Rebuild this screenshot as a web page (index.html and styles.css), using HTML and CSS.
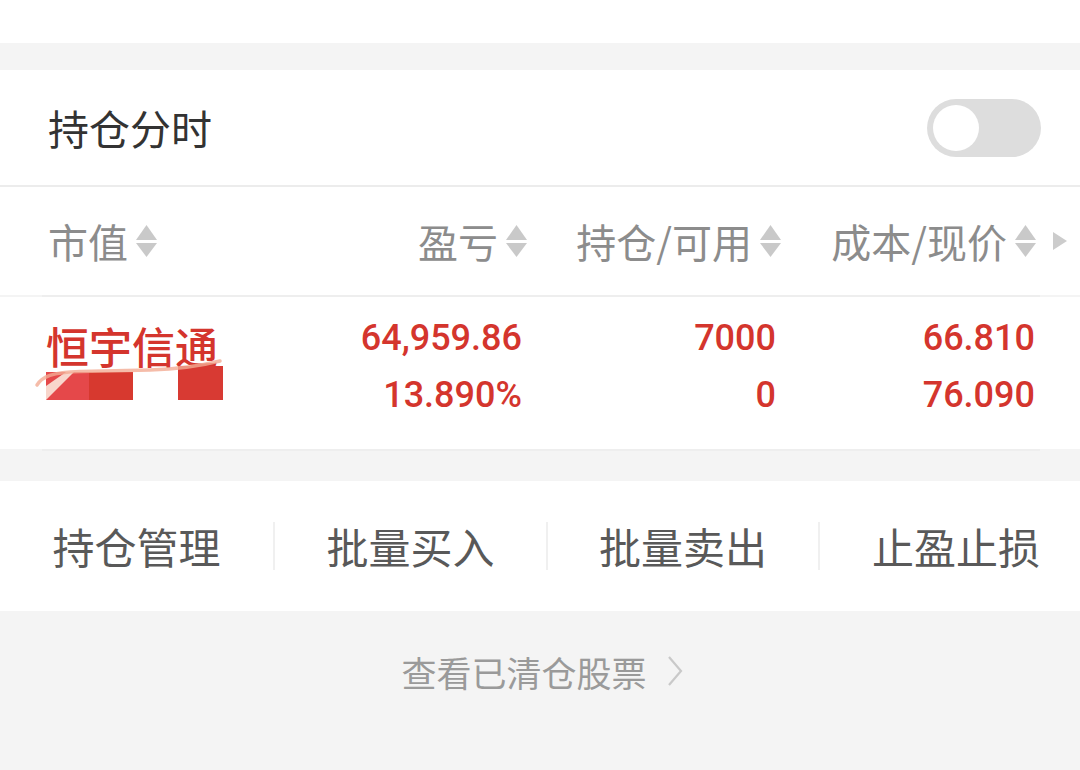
FILE: index.html
```html
<!DOCTYPE html>
<html lang="zh-CN">
<head>
<meta charset="utf-8">
<title>持仓</title>
<link rel="stylesheet" href="styles.css">
</head>
<body>
<div class="page">
  <div class="topbar"></div>
  <div class="band"></div>

  <div class="title-row">
    <span class="title">持仓分时</span>
    <span class="toggle"><span class="knob"></span></span>
  </div>
  <div class="rule-full"></div>

  <div class="thead">
    <div class="th th-first">市值<svg class="sort" viewBox="0 0 21 32"><path d="M0 15 L10.5 0 L21 15 Z"/><path d="M0 18 L21 18 L10.5 32 Z"/></svg></div>
    <div class="th">盈亏<svg class="sort" viewBox="0 0 21 32"><path d="M0 15 L10.5 0 L21 15 Z"/><path d="M0 18 L21 18 L10.5 32 Z"/></svg></div>
    <div class="th">持仓/可用<svg class="sort" viewBox="0 0 21 32"><path d="M0 15 L10.5 0 L21 15 Z"/><path d="M0 18 L21 18 L10.5 32 Z"/></svg></div>
    <div class="th">成本/现价<svg class="sort" viewBox="0 0 21 32"><path d="M0 15 L10.5 0 L21 15 Z"/><path d="M0 18 L21 18 L10.5 32 Z"/></svg></div>
    <div class="th-more"><svg class="more" viewBox="0 0 14 18"><path d="M0 0 L14 9 L0 18 Z"/></svg></div>
  </div>
  <div class="rule-inset"></div>

  <div class="trow">
    <div class="name-cell">
      <span class="name">恒宇信通</span>
      <svg class="redact" viewBox="30 350 195 52" width="195" height="52">
        <rect x="46" y="370" width="43" height="28" fill="#e5484a"/>
        <rect x="89" y="370" width="44" height="28" fill="#d7392f"/>
        <rect x="178" y="364" width="45" height="34" fill="#d83a33"/>
        <polygon points="46,398 46,384 66,370 74,370" fill="#f8d6cc"/>
        <path d="M37 383 C42 375 52 370 80 369.5 L150 368 C182 367 200 364 220 359" fill="none" stroke="#f3ab93" stroke-width="3.5" stroke-linecap="round" opacity="0.8"/>
      </svg>
    </div>
    <div class="num">
      <span>64,959.86</span>
      <span>13.890%</span>
    </div>
    <div class="num">
      <span>7000</span>
      <span>0</span>
    </div>
    <div class="num">
      <span>66.810</span>
      <span>76.090</span>
    </div>
  </div>
  <div class="rule-inset"></div>

  <div class="band2"></div>

  <div class="actions">
    <div class="action">持仓管理</div>
    <div class="action sep">批量买入</div>
    <div class="action sep">批量卖出</div>
    <div class="action sep last">止盈止损</div>
  </div>

  <div class="footer">
    <span class="footer-link">查看已清仓股票<svg class="chev" viewBox="0 0 16 30"><path d="M2 1 L14 15 L2 29" fill="none" stroke="#c9c9c9" stroke-width="2.2"/></svg></span>
  </div>
</div>
</body>
</html>
```

FILE: styles.css
```css
* { box-sizing: border-box; }
html, body { margin: 0; padding: 0; }
body {
  width: 1080px;
  height: 770px;
  overflow: hidden;
  background: #f4f4f4;
  font-family: "Noto Sans CJK SC", "Noto Sans", sans-serif;
}
.page { width: 1080px; }

.topbar { height: 43px; background: #ffffff; }
.band { height: 27px; background: #f4f4f4; }

.title-row {
  height: 115px;
  background: #ffffff;
  display: flex;
  align-items: center;
  justify-content: space-between;
  padding: 0 39px 0 48px;
}
.title { font-size: 41px; color: #333333; line-height: 1; }
.toggle {
  width: 114px;
  height: 58px;
  border-radius: 29px;
  background: #dddddd;
  display: flex;
  align-items: center;
  padding-left: 6px;
}
.knob { width: 46px; height: 46px; border-radius: 50%; background: #ffffff; }

.rule-full { height: 2px; background: #ececec; }
.rule-inset { height: 2px; background: #eeeeee; margin: 0 40px 0 42px; }

.thead {
  height: 108px;
  background: #ffffff;
  display: grid;
  grid-template-columns: 1fr 254px 254px 255px 44px;
  padding-left: 48px;
  align-items: center;
  color: #8c8c8c;
  font-size: 40px;
}
.th { display: flex; align-items: center; justify-content: flex-end; line-height: 1; }
.th-first { justify-content: flex-start; }
.sort { width: 21px; height: 32px; margin-left: 8px; fill: #c9c9c9; }
.th-more { padding-left: 17px; display: flex; align-items: center; }
.more { width: 14px; height: 18px; fill: #cccccc; }

.trow {
  height: 152px;
  background: #ffffff;
  display: grid;
  grid-template-columns: 1fr 254px 254px 259px;
  padding: 13px 45px 0 46px;
  color: #d4352d;
}
.name-cell { position: relative; padding-top: 7px; }
.name { display: block; font-size: 43px; line-height: 57px; font-weight: 500; color: #d4352d; white-space: nowrap; }
.redact { position: absolute; left: -16px; top: 42px; }
.num {
  display: flex;
  flex-direction: column;
  align-items: flex-end;
  font-family: Roboto, "Liberation Sans", sans-serif;
  font-weight: 500;
  font-size: 36px;
  line-height: 57px;
}

.band2 { height: 30px; background: #f4f4f4; }

.actions {
  height: 130px;
  background: #ffffff;
  display: grid;
  grid-template-columns: 273px 273px 272px 1fr;
  align-items: center;
}
.action {
  height: 48px;
  display: flex;
  align-items: center;
  justify-content: center;
  font-size: 42px;
  color: #595959;
  line-height: 1;
}
.action.sep { border-left: 2px solid #f0f0f0; }
.action.last { padding-left: 12px; }

.footer {
  height: 159px;
  background: #f4f4f4;
  display: flex;
  justify-content: center;
  padding-top: 35px;
}
.footer-link {
  display: flex;
  align-items: center;
  height: 50px;
  font-size: 35px;
  color: #9a9a9a;
  line-height: 1;
  padding-left: 4px;
}
.chev { width: 16px; height: 30px; margin-left: 20px; }
```
